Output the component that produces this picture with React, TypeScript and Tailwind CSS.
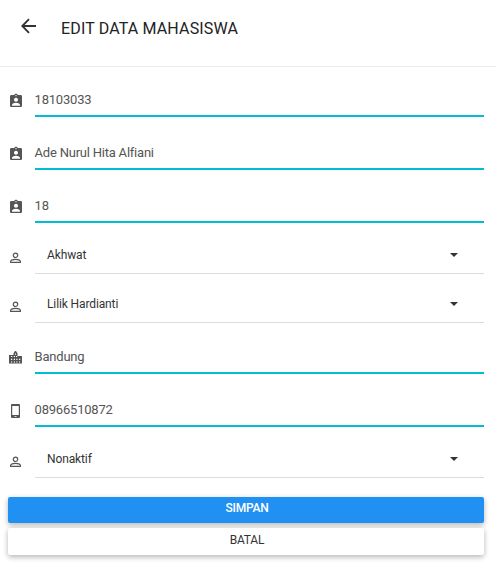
import React from "react";
import { MdAssignmentInd } from "react-icons/md";

const font = "font-['Roboto',sans-serif]";

const BackIcon = () => (
  <svg className="mt-[18px] h-4 w-[15px] fill-none stroke-[#333]" viewBox="0 0 15 16" strokeWidth="1.9">
    <path d="M15 8H1.5M8 1.2L1.3 8L8 14.8" />
  </svg>
);

const BadgeIcon = () => <MdAssignmentInd className="-ml-[1.5px] size-4" />;

const PersonIcon = () => (
  <svg className="size-[13px] fill-none stroke-[#555]" viewBox="0 0 13 13" strokeWidth="1.2">
    <circle cx="6.5" cy="4.3" r="2.2" />
    <path d="M1.6 11.4V10.6C1.6 8.9 4.4 8.3 6.5 8.3S11.4 8.9 11.4 10.6V11.4Z" />
  </svg>
);

const CityIcon = () => (
  <svg className="mt-px h-[13px] w-[13px] fill-[#555]" viewBox="0 0 13 13" fillRule="evenodd">
    <path d="M0 4H4.5V2.2L6 0H7L8.5 2.2V5H13V12.5H0ZM2 5V6H3.2V5ZM2 7.8V9H3.2V7.8ZM2 10.5V11.5H3.2V10.5ZM6 2.5V3.8H7V2.5ZM4.8 5V6H6V5ZM7 5V6H8.2V5ZM4.8 7.8V9H6V7.8ZM7.3 7.8V9H8.5V7.8ZM4.8 10.5V11.5H6V10.5ZM7.3 10.5V11.5H8.5V10.5ZM10 7.8V9H11.2V7.8ZM10 10.5V11.5H11.2V10.5Z" />
  </svg>
);

const PhoneIcon = () => (
  <svg className="ml-[1.5px] mt-px h-[14px] w-[9px] fill-[#555]" viewBox="0 0 9 14" fillRule="evenodd">
    <path d="M1 0H8Q9 0 9 1V13Q9 14 8 14H1Q0 14 0 13V1Q0 0 1 0ZM1.2 2V11H7.8V2ZM3.5 12V12.8H5.5V12Z" />
  </svg>
);

type RowProps = { icon: React.ReactNode; value: string; className: string };

function InputRow({ icon, value, className }: RowProps) {
  return (
    <div className={`flex items-end ${className}`}>
      <div className="flex h-6 w-[27px] shrink-0 items-start pl-px text-[#555]">{icon}</div>
      <div className="h-[27px] flex-1 border-b-2 border-[#00bcd4] text-[13px] leading-5 tracking-[-0.22px] text-[#555]">
        <span className="-ml-[0.4px]">{value}</span>
      </div>
    </div>
  );
}

function SelectRow({ icon, value, className }: RowProps) {
  return (
    <div className={`flex items-end ${className}`}>
      <div className="flex h-[23px] w-[27px] shrink-0 items-start pl-px">{icon}</div>
      <div className="flex h-7 flex-1 items-start justify-between border-b border-[#dcdcdc] pl-3 pr-[26px] text-xs leading-[18px] tracking-[-0.12px] text-[#333]">
        <span>{value}</span>
        <svg className="mt-[7px] h-1 w-2 fill-[#333]" viewBox="0 0 8 4"><path d="M0 0H8L4 4Z" /></svg>
      </div>
    </div>
  );
}

export default function App() {
  return (
    <main className={`h-[567px] w-full overflow-hidden bg-white ${font}`}>
      <header className="flex h-[67px] items-start border-b border-[#ebebeb] pl-[21px]">
        <BackIcon />
        <h1 className="ml-[25px] mt-[17px] text-base leading-6 tracking-[0.15px] text-[#222]">EDIT DATA MAHASISWA</h1>
      </header>
      <form className="px-2 pr-3">
        <InputRow className="h-[50px]" icon={<BadgeIcon />} value="18103033" />
        <InputRow className="h-[53px]" icon={<BadgeIcon />} value="Ade Nurul Hita Alfiani" />
        <InputRow className="h-[53px]" icon={<BadgeIcon />} value="18" />
        <SelectRow className="h-[51px]" icon={<PersonIcon />} value="Akhwat" />
        <SelectRow className="h-[49px]" icon={<PersonIcon />} value="Lilik Hardianti" />
        <InputRow className="h-[51px]" icon={<CityIcon />} value="Bandung" />
        <InputRow className="h-[53px]" icon={<PhoneIcon />} value="08966510872" />
        <SelectRow className="h-[51px]" icon={<PersonIcon />} value="Nonaktif" />
        <div className="mt-[19px] flex flex-col gap-[5px]">
          <button type="button" className="h-[26px] w-full rounded-[2px] bg-[#2091f2] pb-1 pl-[2px] text-xs font-medium tracking-[-0.2px] text-white shadow-[0_2px_5px_rgba(0,0,0,0.16),0_2px_6px_rgba(0,0,0,0.15)]">SIMPAN</button>
          <button type="button" className="h-[27px] w-full rounded-[2px] bg-white pb-[3px] pl-[2px] text-xs tracking-[-0.2px] text-[#333] shadow-[0_2px_5px_rgba(0,0,0,0.16),0_2px_6px_rgba(0,0,0,0.15)]">BATAL</button>
        </div>
      </form>
    </main>
  );
}
